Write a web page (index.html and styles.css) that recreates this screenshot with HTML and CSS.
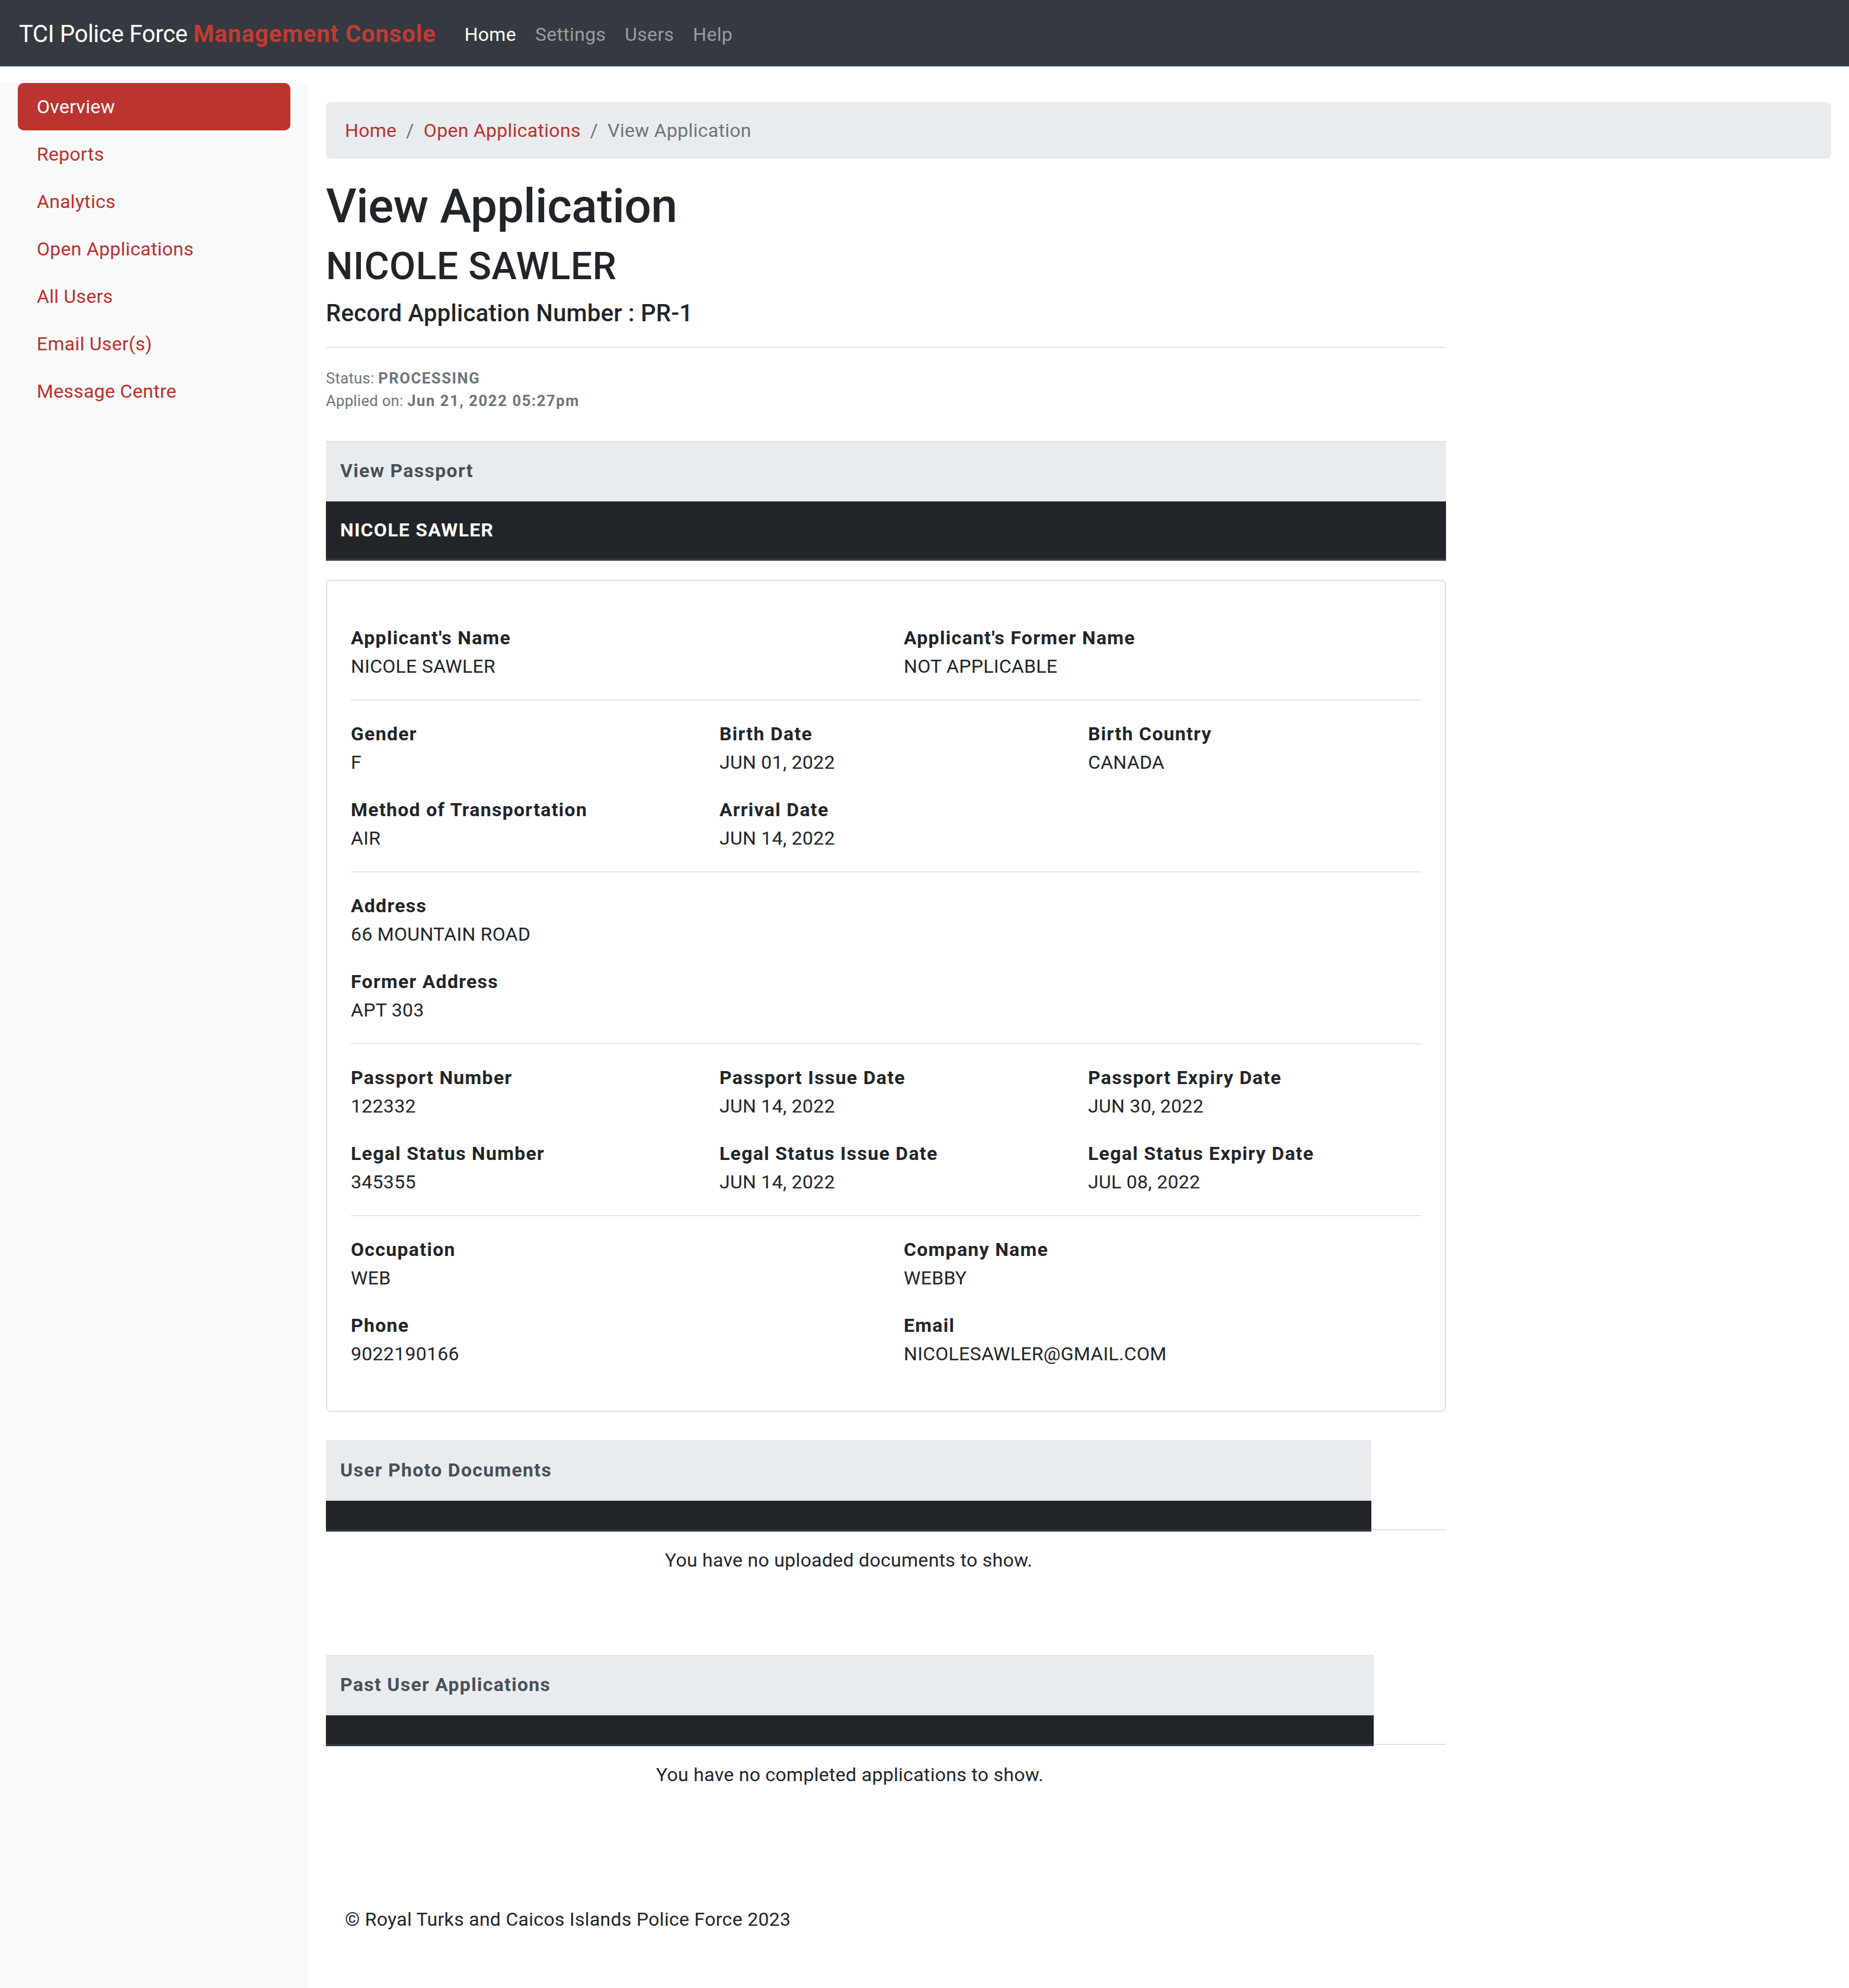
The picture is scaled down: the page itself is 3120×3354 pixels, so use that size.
FILE: index.html
```html
<!DOCTYPE html>
<html lang="en">
<head>
<meta charset="utf-8">
<title>View Application - TCI Police Force Management Console</title>
<link rel="stylesheet" href="styles.css">
</head>
<body>
<nav class="topbar">
  <a class="brand" href="#">TCI Police Force <span class="brand-accent">Management Console</span></a>
  <ul class="topnav">
    <li><a class="topnav-link is-active" href="#">Home</a></li>
    <li><a class="topnav-link" href="#">Settings</a></li>
    <li><a class="topnav-link" href="#">Users</a></li>
    <li><a class="topnav-link" href="#">Help</a></li>
  </ul>
</nav>

<div class="layout">
  <aside class="sidebar">
    <ul class="side-nav">
      <li><a class="side-link is-active" href="#">Overview</a></li>
      <li><a class="side-link" href="#">Reports</a></li>
      <li><a class="side-link" href="#">Analytics</a></li>
      <li><a class="side-link" href="#">Open Applications</a></li>
      <li><a class="side-link" href="#">All Users</a></li>
      <li><a class="side-link" href="#">Email User(s)</a></li>
      <li><a class="side-link" href="#">Message Centre</a></li>
    </ul>
  </aside>

  <main class="main">
    <ol class="breadcrumb">
      <li class="crumb"><a href="#">Home</a></li>
      <li class="crumb"><a href="#">Open Applications</a></li>
      <li class="crumb is-current">View Application</li>
    </ol>

    <div class="content">
      <h1 class="page-title">View Application</h1>
      <h2 class="applicant-name">NICOLE SAWLER</h2>
      <h5 class="record-number">Record Application Number : PR-1</h5>
      <hr class="divider">
      <p class="meta">
        Status: <b>PROCESSING</b><br>
        Applied on: <b>Jun 21, 2022 05:27pm</b>
      </p>

      <div class="panel-head">View Passport</div>
      <div class="panel-dark">NICOLE SAWLER</div>

      <div class="card">
        <div class="fields cols-2">
          <div class="field"><div class="label">Applicant's Name</div><div class="value">NICOLE SAWLER</div></div>
          <div class="field"><div class="label">Applicant's Former Name</div><div class="value">NOT APPLICABLE</div></div>
        </div>
        <hr class="card-rule">
        <div class="fields cols-3">
          <div class="field"><div class="label">Gender</div><div class="value">F</div></div>
          <div class="field"><div class="label">Birth Date</div><div class="value">JUN 01, 2022</div></div>
          <div class="field"><div class="label">Birth Country</div><div class="value">CANADA</div></div>
          <div class="field"><div class="label">Method of Transportation</div><div class="value">AIR</div></div>
          <div class="field"><div class="label">Arrival Date</div><div class="value">JUN 14, 2022</div></div>
        </div>
        <hr class="card-rule">
        <div class="fields cols-1">
          <div class="field"><div class="label">Address</div><div class="value">66 MOUNTAIN ROAD</div></div>
          <div class="field"><div class="label">Former Address</div><div class="value">APT 303</div></div>
        </div>
        <hr class="card-rule">
        <div class="fields cols-3">
          <div class="field"><div class="label">Passport Number</div><div class="value">122332</div></div>
          <div class="field"><div class="label">Passport Issue Date</div><div class="value">JUN 14, 2022</div></div>
          <div class="field"><div class="label">Passport Expiry Date</div><div class="value">JUN 30, 2022</div></div>
          <div class="field"><div class="label">Legal Status Number</div><div class="value">345355</div></div>
          <div class="field"><div class="label">Legal Status Issue Date</div><div class="value">JUN 14, 2022</div></div>
          <div class="field"><div class="label">Legal Status Expiry Date</div><div class="value">JUL 08, 2022</div></div>
        </div>
        <hr class="card-rule">
        <div class="fields cols-2">
          <div class="field"><div class="label">Occupation</div><div class="value">WEB</div></div>
          <div class="field"><div class="label">Company Name</div><div class="value">WEBBY</div></div>
          <div class="field"><div class="label">Phone</div><div class="value">9022190166</div></div>
          <div class="field"><div class="label">Email</div><div class="value">NICOLESAWLER@GMAIL.COM</div></div>
        </div>
      </div>

      <section class="doc-table doc-table-photos">
        <div class="doc-head">User Photo Documents</div>
        <div class="doc-dark"></div>
        <div class="doc-empty"><p class="doc-msg">You have no uploaded documents to show.</p></div>
      </section>

      <section class="doc-table doc-table-past">
        <div class="doc-head">Past User Applications</div>
        <div class="doc-dark"></div>
        <div class="doc-empty"><p class="doc-msg">You have no completed applications to show.</p></div>
      </section>
    </div>

    <footer class="footer">© Royal Turks and Caicos Islands Police Force 2023</footer>
  </main>
</div>
</body>
</html>
```

FILE: styles.css
```css
html {
  zoom: 2;
}

* {
  box-sizing: border-box;
}

body {
  margin: 0;
  font-family: Roboto, "Liberation Sans", Arial, sans-serif;
  font-size: 16px;
  line-height: 1.5;
  letter-spacing: 0.15px;
  color: #212529;
  background: #fff;
}

a {
  text-decoration: none;
}

b,
.label,
.panel-head,
.panel-dark,
.doc-head {
  letter-spacing: 0.65px;
}

/* Top bar */
.topbar {
  display: flex;
  align-items: center;
  height: 56px;
  padding: 9px 16px 7px;
  background: #343a40;
}

.brand {
  font-size: 20px;
  line-height: 30px;
  letter-spacing: -0.15px;
  color: #fff;
  margin-right: 16px;
  white-space: nowrap;
}

.brand-accent {
  color: #c33a32;
  font-weight: 700;
  letter-spacing: 0.45px;
}

.topnav {
  display: flex;
  list-style: none;
  margin: 0;
  padding: 0;
}

.topnav-link {
  display: block;
  padding: 8px;
  color: rgba(255, 255, 255, 0.5);
}

.topnav-link.is-active {
  color: #fff;
}

/* Layout */
.layout {
  display: flex;
  margin-top: 14px;
}

.sidebar {
  width: 260px;
  flex: 0 0 260px;
  padding: 0 15px;
  background: #f8f9fa;
}

.side-nav {
  list-style: none;
  margin: 0;
  padding: 0;
}

.side-link {
  display: block;
  padding: 8px 16px;
  color: #bd302c;
  border-radius: 5px;
}

.side-link.is-active {
  background: #bc3430;
  color: #fff;
}

.main {
  flex: 1;
  min-width: 0;
  padding: 16px 15px 30px;
}

/* Breadcrumb */
.breadcrumb {
  display: flex;
  list-style: none;
  margin: 0 0 16px;
  padding: 12px 16px;
  background: #e9ecef;
  border-radius: 4px;
}

.crumb a {
  color: #bd302c;
}

.crumb + .crumb::before {
  content: "/";
  padding: 0 8px;
  color: #6c757d;
}

.crumb.is-current {
  color: #6c757d;
}

/* Content */
.content {
  width: 945px;
}

.page-title {
  margin: 0 0 8px;
  font-size: 40px;
  font-weight: 500;
  line-height: 1.2;
  letter-spacing: -0.2px;
}

.applicant-name {
  margin: 0 0 8px;
  font-size: 32px;
  font-weight: 500;
  line-height: 1.2;
  letter-spacing: 0.3px;
}

.record-number {
  margin: 0;
  font-size: 20px;
  font-weight: 500;
  line-height: 1.2;
}

.divider {
  margin: 16px 0;
  border: 0;
  border-top: 1px solid rgba(0, 0, 0, 0.1);
}

.meta {
  margin: 0 0 24px;
  font-size: 12.8px;
  line-height: 19.2px;
  color: #6c757d;
}

.meta b {
  font-weight: 700;
  letter-spacing: 0.8px;
}

/* Passport header */
.panel-head,
.doc-head {
  padding: 12px;
  background: #e9ecef;
  border-top: 1px solid #e3e6ea;
  border-bottom: 2px solid #e3e6ea;
  color: #495057;
  font-weight: 700;
}

.panel-dark {
  padding: 12px;
  background: #212529;
  border-bottom: 2px solid #32383e;
  color: #fff;
  font-weight: 700;
}

/* Card */
.card {
  margin-top: 16px;
  padding: 36px 20px 20px;
  border: 1px solid rgba(0, 0, 0, 0.125);
  border-radius: 4px;
}

.fields {
  display: grid;
  column-gap: 30px;
}

.cols-1 {
  grid-template-columns: 1fr;
}

.cols-2 {
  grid-template-columns: 1fr 1fr;
}

.cols-3 {
  grid-template-columns: 1fr 1fr 1fr;
}

.field {
  margin-bottom: 16px;
}

.label {
  font-weight: 700;
}

.card-rule {
  margin: 0 0 16px;
  border: 0;
  border-top: 1px solid rgba(0, 0, 0, 0.1);
}

/* Document tables */
.doc-table-photos {
  margin-top: 24px;
}

.doc-table-past {
  margin-top: 56px;
}

.doc-table-photos .doc-head,
.doc-table-photos .doc-dark,
.doc-table-photos .doc-msg {
  width: 882px;
}

.doc-table-past .doc-head,
.doc-table-past .doc-dark,
.doc-table-past .doc-msg {
  width: 884px;
}

.doc-dark {
  position: relative;
  height: 26px;
  background: #212529;
  border-bottom: 2px solid #32383e;
}

.doc-empty {
  margin-top: -2px;
  border-top: 1px solid #dee2e6;
}

.doc-msg {
  margin: 0;
  padding: 13px 12px 12px;
  text-align: center;
}

/* Footer */
.footer {
  margin-top: 70px;
  padding: 16px;
}
```
